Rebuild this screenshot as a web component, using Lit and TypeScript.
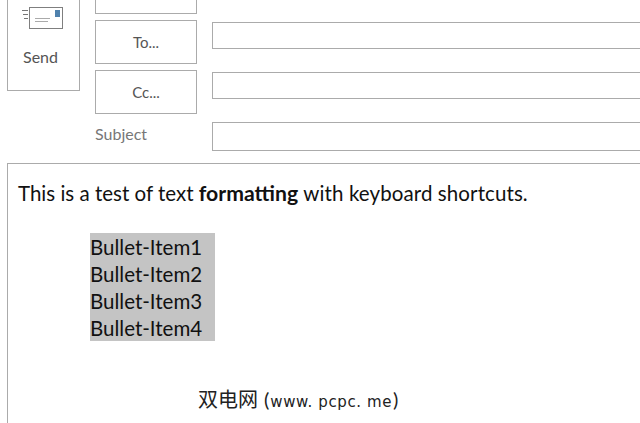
import { LitElement, html, css } from "lit";
import { customElement } from "lit/decorators.js";

const BULLETS = ["Bullet-Item1", "Bullet-Item2", "Bullet-Item3", "Bullet-Item4"];

@customElement("app-root")
export class AppRoot extends LitElement {
  static styles = css`
    :host {
      display: block;
      width: 640px;
      height: 423px;
      overflow: hidden;
      background: #fff;
      font-family: Lato, "Noto Sans CJK SC", sans-serif;
      color: #111;
    }
    .head {
      display: grid;
      grid-template-columns: 73px 102px 1fr;
      column-gap: 15px;
      padding-left: 7px;
      height: 163px;
      box-sizing: border-box;
    }
    .send {
      height: 91px;
      box-sizing: border-box;
      border: 1px solid #ababab;
      border-top: none;
      padding: 6px 0 0 14px;
      color: #555;
      font-size: 16px;
    }
    .send svg {
      display: block;
      margin-bottom: 11px;
    }
    .send span {
      margin-left: 1px;
    }
    .buttons {
      display: flex;
      flex-direction: column;
      gap: 6px;
    }
    .btn {
      height: 44px;
      box-sizing: border-box;
      border: 1px solid #ababab;
      display: flex;
      align-items: center;
      justify-content: center;
      color: #555;
      font-size: 15px;
    }
    .btn.cut {
      height: 14px;
      border-top: none;
    }
    .subject {
      margin-top: 4px;
      color: #777;
      font-size: 16px;
    }
    .inputs {
      display: flex;
      flex-direction: column;
    }
    .clipped {
      height: 36px;
      margin: -14px 0 0 6px;
      font-size: 14px;
      line-height: 14px;
      color: #999;
    }
    .input {
      height: 27px;
      box-sizing: border-box;
      border: 1px solid #ababab;
      border-right: none;
      margin-bottom: 23px;
    }
    .input.tall {
      height: 29px;
    }
    .body {
      margin-left: 7px;
      height: 280px;
      box-sizing: border-box;
      border: 1px solid #ababab;
      border-right: none;
      padding: 15px 10px 0;
      font-size: 20.5px;
      color: #111;
    }
    .line {
      height: 27px;
      line-height: 29px;
    }
    .line b {
      font-size: 21.2px;
    }
    .tail {
      letter-spacing: 0.1px;
    }
    .list {
      margin: 27px 0 0 72px;
      width: 125px;
      background: #c4c4c4;
    }
    .mark {
      margin: 46px 0 0 180px;
      font-size: 20px;
      color: #222;
      line-height: 24px;
      white-space: nowrap;
      display: flex;
      align-items: baseline;
    }
    .mark .paren {
      margin-left: 6px;
    }
    .mark .url {
      margin-left: 1px;
      font-family: "DejaVu Sans", sans-serif;
      font-size: 15px;
      letter-spacing: 0.6px;
    }
    .mark .paren.end {
      margin-left: 1px;
    }
  `;

  render() {
    return html`
      <div class="head">
        <div class="send">
          <svg width="46" height="30" viewBox="0 0 46 30">
            <rect x="7.5" y="1.5" width="33" height="21" fill="#fff" stroke="#7f7f7f"></rect>
            <rect x="33" y="4" width="5" height="7" fill="#4f81ad"></rect>
            <path d="M0 4.5h6M1 8.5h5M2 12.5h4" stroke="#777" fill="none"></path>
            <path d="M13 12.5h15M13 15.5h13" stroke="#aaa" fill="none"></path>
          </svg>
          <span>Send</span>
        </div>
        <div class="buttons">
          <div class="btn cut"></div>
          <div class="btn">To...</div>
          <div class="btn">Cc...</div>
          <div class="subject">Subject</div>
        </div>
        <div class="inputs">
          <div class="clipped">y</div>
          <div class="input"></div>
          <div class="input"></div>
          <div class="input tall"></div>
        </div>
      </div>
      <div class="body">
        <div class="line">This is a test of text <b>formatting</b> <span class="tail">with keyboard shortcuts.</span></div>
        <div class="list">
          ${BULLETS.map((b) => html`<div class="line">${b}</div>`)}
        </div>
        <div class="mark">
          <span>双电网</span><span class="paren">(</span><span class="url">www. pcpc. me</span><span class="paren end">)</span>
        </div>
      </div>
    `;
  }
}
